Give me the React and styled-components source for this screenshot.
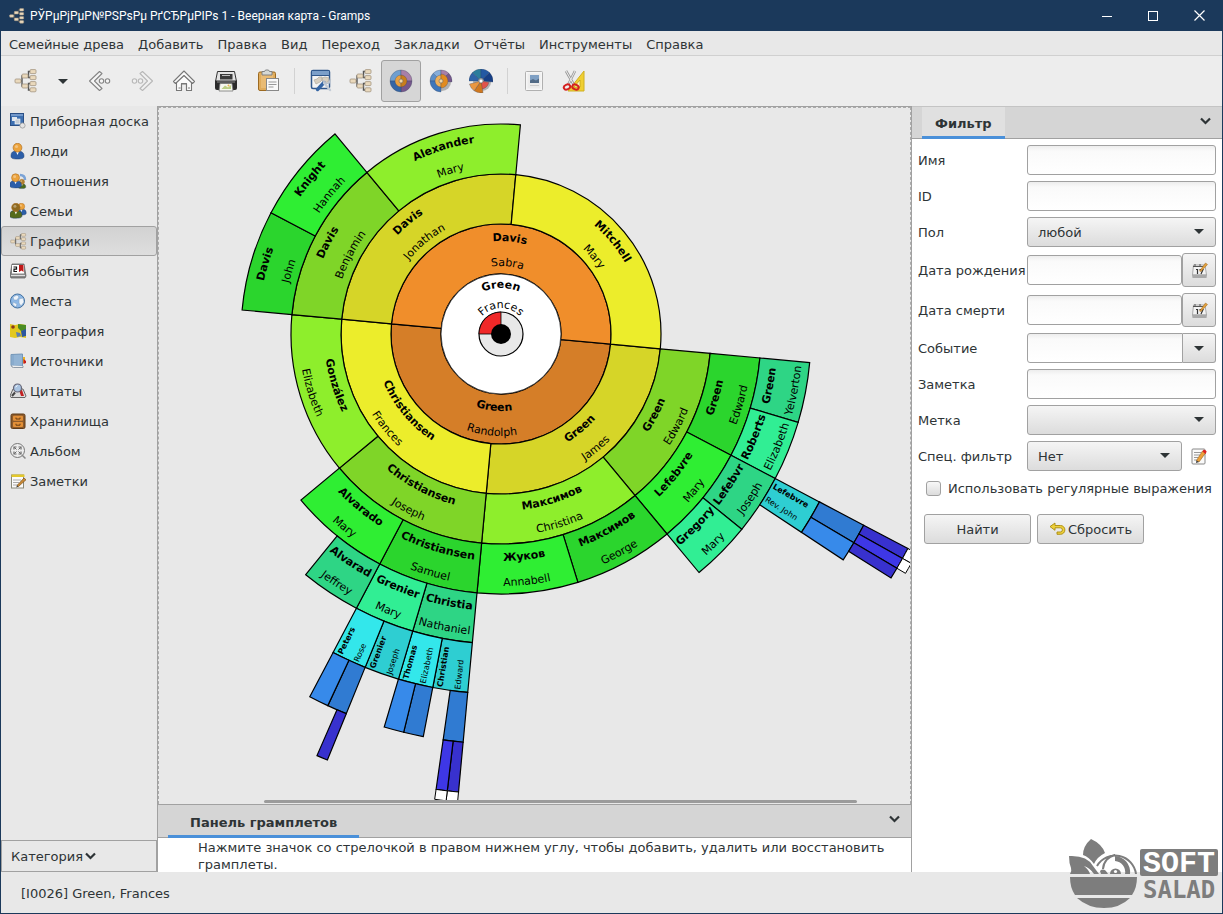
import React, { useState } from 'react';
import styled, { createGlobalStyle } from 'styled-components';

const NAVY = '#1b395b';
const INK = '#2e3436';
const LINE = '#a1a1a1';
const BLUE = '#4a90d9';

const GlobalStyle = createGlobalStyle`
  * { box-sizing: border-box; }
  body { margin: 0; }
  body, button, input, select {
    font-family: "DejaVu Sans", Verdana, sans-serif;
    font-size: 13px;
    line-height: 17px;
    color: ${INK};
  }
  button { padding: 0; border: none; background: none; }
  svg { display: block; flex: none; }
`;

const Window = styled.div`
  display: flex;
  flex-direction: column;
  height: 100vh;
  overflow: hidden;
  border: 1px solid ${NAVY};
  border-top: none;
  background: #e8e8e8;
`;

const TitleBar = styled.header`
  display: flex;
  align-items: center;
  height: 31px;
  flex: none;
  padding-left: 8px;
  background: ${NAVY};
  color: #fff;
`;

const Title = styled.h1`
  flex: 1;
  margin: 0 0 0 5px;
  font: 400 12px/16px Roboto, "Open Sans", sans-serif;
`;

const CaptionButton = styled.button`
  display: grid;
  place-items: center;
  width: 46px;
  height: 30px;
`;

const MenuBar = styled.nav`
  display: flex;
  align-items: center;
  gap: 14px;
  height: 25px;
  flex: none;
  padding: 2px 8px 0;
  border-bottom: 1px solid #d0d0d0;
`;

const Toolbar = styled.div`
  display: flex;
  align-items: center;
  height: 50px;
  flex: none;
  padding-left: 5px;
  background: #ededed;
`;

const ToolGroup = styled.div`
  display: flex;
  gap: ${(props) => props.$gap || 0}px;
`;

const ToolButton = styled.button`
  display: grid;
  place-items: center;
  width: ${(props) => (props.$narrow ? 34 : 40)}px;
  height: 42px;
  border: 1px solid ${(props) => (props.$active ? LINE : 'transparent')};
  border-radius: 3px;
  background: ${(props) => (props.$active ? '#d6d6d6' : 'none')};
`;

const Separator = styled.div`
  width: 1px;
  height: 26px;
  margin: 0 6px;
  background: #d2d2d2;
`;

const Body = styled.div`
  display: flex;
  flex: 1;
  min-height: 0;
`;

const Sidebar = styled.aside`
  display: flex;
  flex-direction: column;
  width: 156px;
  flex: none;
`;

const CategoryButton = styled.button`
  display: flex;
  align-items: center;
  gap: 3px;
  height: 30px;
  padding-left: 8px;
  border: 1px solid ${(props) => (props.$active ? LINE : 'transparent')};
  border-radius: 3px;
  background: ${(props) => (props.$active ? 'linear-gradient(#d2d2d2, #dedede)' : 'none')};
  text-align: left;
  white-space: nowrap;
`;

const CategoryMenu = styled.button`
  display: flex;
  align-items: center;
  gap: 2px;
  height: 32px;
  margin-top: auto;
  padding-left: 9px;
  border: 1px solid ${LINE};
`;

const Main = styled.main`
  display: flex;
  flex-direction: column;
  flex: 1;
  min-width: 0;
  border: 1px solid ${LINE};
  border-bottom: none;
`;

const Canvas = styled.div`
  position: relative;
  flex: 1;
  min-height: 0;
  overflow: hidden;
  border: 1px dashed #aaa;
  border-bottom: none;
`;

const ScrollThumb = styled.div`
  position: absolute;
  left: 14%;
  right: 7%;
  bottom: 1px;
  height: 3px;
  border-radius: 2px;
  background: #9b9b9b;
`;

const TabStrip = styled.div`
  display: flex;
  align-items: stretch;
  justify-content: space-between;
  height: ${(props) => props.$height}px;
  flex: none;
  padding: 0 10px;
  border-top: 1px solid ${(props) => (props.$topLine ? LINE : '#c4c4c4')};
  border-bottom: 1px solid ${LINE};
  background: #d5d5d5;
`;

const Tab = styled.button`
  margin-bottom: -1px;
  padding: 4px ${(props) => props.$pad}px 0;
  border-bottom: 3px solid ${BLUE};
  background: ${(props) => (props.$raised ? '#e0e0e0' : 'none')};
  font-weight: 700;
`;

const ChevronButton = styled.button`
  width: 12px;
  height: 27px;
`;

const GrampletHint = styled.p`
  height: 34px;
  flex: none;
  margin: 0;
  padding: 1px 16px 0 40px;
  overflow: hidden;
  background: #fff;
`;

const FilterPane = styled.section`
  width: 310px;
  flex: none;
  background: #fff;
`;

const FilterForm = styled.form`
  display: grid;
  grid-template-columns: 103px 1fr;
  align-items: center;
  gap: 6px;
  padding: 6px;
  white-space: nowrap;
`;

const FieldRow = styled.div`
  display: flex;
  align-items: center;
`;

const TextBox = styled.input`
  flex: 1;
  width: 100%;
  min-width: 0;
  height: 30px;
  padding: 0 8px;
  border: 1px solid ${LINE};
  border-radius: ${(props) => (props.$joined ? '3px 0 0 3px' : '3px')};
  background: linear-gradient(#ededed, #fafafa 5px, #fff);
`;

const PushButton = styled.button`
  display: flex;
  align-items: center;
  justify-content: center;
  gap: 2px;
  width: ${(props) => props.$width}px;
  height: ${(props) => props.$height || 30}px;
  border: 1px solid ${LINE};
  border-left-width: ${(props) => (props.$joined ? 0 : 1)}px;
  border-radius: ${(props) => (props.$joined ? '0 3px 3px 0' : '3px')};
  background: linear-gradient(#f5f5f5, #dcdcdc);
`;

const SelectWrap = styled.div`
  position: relative;
  flex: 1;

  &::after {
    content: '';
    position: absolute;
    right: 12px;
    top: 12px;
    border: 5px solid transparent;
    border-top-color: ${INK};
    border-bottom: none;
    pointer-events: none;
  }
`;

const Select = styled.select`
  appearance: none;
  display: block;
  width: 100%;
  height: 30px;
  padding: 0 10px;
  border: 1px solid ${LINE};
  border-radius: 3px;
  background: linear-gradient(#f5f5f5, #dcdcdc);
`;

const IconButton = styled.button`
  display: grid;
  place-items: center;
  width: 34px;
  height: 30px;
`;

const CheckRow = styled.label`
  grid-column: 1 / -1;
  display: flex;
  align-items: center;
  gap: 7px;
  height: 22px;
  padding-left: 8px;
`;

const CheckBox = styled.input`
  appearance: none;
  width: 15px;
  height: 15px;
  margin: 0;
  border: 1px solid ${LINE};
  border-radius: 3px;
  background: linear-gradient(#f8f8f8, #dcdcdc);

  &:checked { background: ${BLUE}; }
`;

const Actions = styled.div`
  grid-column: 1 / -1;
  display: flex;
  gap: 6px;
  padding: 9px 6px;
`;

const StatusBar = styled.footer`
  display: flex;
  align-items: center;
  height: 41px;
  flex: none;
  padding: 2px 20px 0;
`;

const Watermark = styled.svg`
  position: absolute;
  right: 4px;
  bottom: 4px;
`;

/* ---------- icons ---------- */

function TreeIcon({ size = 24 }) {
  const boxes = [[1, 10], [8, 5], [8, 15], [16, 0.6], [16, 6.6], [16, 12.6], [16, 18.8]];
  return (
    <svg width={size} height={size} viewBox="0 0 24 24">
      <path
        d="M6 12h2V7h2M8 12v5h2M13 7h1.500V2.500H17M14.500 7v1.500H17M13 17h1.500v-2.500H17M14.500 17v4H17"
        fill="none"
        stroke="#555"
        strokeWidth="1.400"
      />
      {boxes.map(([x, y]) => (
        <rect key={`${x}-${y}`} x={x} y={y} width="6" height="4" rx="1" fill="#ead9bc" stroke="#a39580" strokeWidth="0.800" />
      ))}
    </svg>
  );
}

function Triangle() {
  return (
    <svg width="10" height="5" viewBox="0 0 10 5"><path d="M0 0h10L5 5z" fill={INK} /></svg>
  );
}

function Chevron() {
  return (
    <svg width="11" height="8" viewBox="0 0 11 8">
      <path d="M1 1.500 5.500 6 10 1.500" fill="none" stroke={INK} strokeWidth="2.200" />
    </svg>
  );
}

function ArrowIcon({ forward }) {
  return (
    <svg width="24" height="24" viewBox="0 0 24 24" opacity={forward ? 0.5 : 1}>
      <g transform={forward ? 'matrix(-1 0 0 1 24 0)' : undefined} fill="#f6f6f6" stroke="#858585" strokeWidth="1.100">
        <path d="M11.500 2.500 14 4.500 6.500 12l7.500 7.500-2.500 2L1.500 12z" strokeLinejoin="round" />
        <circle cx="13.500" cy="12" r="2.200" />
        <circle cx="19.500" cy="12" r="2.200" />
      </g>
    </svg>
  );
}

function HomeIcon() {
  return (
    <svg width="24" height="24" viewBox="0 0 24 24" fill="#fafafa" stroke="#777" strokeWidth="1.100" strokeLinejoin="round">
      <path d="M4.500 13v8.500h5V15h5v6.500h5V13L12 6z" />
      <path d="M12 2 1.500 12.500l2 2L12 6.500l8.500 8 2-2z" />
      <path d="M9.500 21v-6.500h5V21M6.500 19h2M16 19h2" fill="none" />
    </svg>
  );
}

function PrinterIcon() {
  return (
    <svg width="24" height="24" viewBox="0 0 24 24">
      <path d="M3.500 2.500h17l2 10h-21z" fill="#e3e3e3" stroke="#333" />
      <path d="M6 5h12.500v5.500H6z" fill="#3a3a3a" />
      <path d="M8 6.500h8" stroke="#bbb" />
      <path d="M1 11.500h22V19a2 2 0 0 1-2 2H3a2 2 0 0 1-2-2z" fill="#2b2b2b" />
      <path d="M3 13h18" stroke="#8a8a8a" />
      <path d="M6 14.500h12l1 7.500H5z" fill="#f6f7ee" stroke="#777" strokeWidth="0.800" />
      <path d="M7.500 20l3.500-3.500 3 2 3-2.500v4z" fill="#bccf82" />
      <circle cx="14.500" cy="16.500" r="1" fill="#e8b44c" />
    </svg>
  );
}

function PasteIcon() {
  return (
    <svg width="24" height="24" viewBox="0 0 24 24">
      <rect x="2.500" y="3" width="17" height="18.500" rx="1.500" fill="#e0ac5c" stroke="#9c6a21" />
      <rect x="5" y="5" width="12" height="14" fill="#e9bb74" />
      <path d="M6 2.500h2.500L9.500 1h3l1 1.500H16V6H6z" fill="#d5d8d5" stroke="#77797a" strokeWidth="0.900" />
      <rect x="10.500" y="9.500" width="12" height="12" fill="#fafafa" stroke="#888" />
      <path d="M12.500 13h8M12.500 15.500h8M12.500 18h5" stroke="#999" />
    </svg>
  );
}

function ConfigViewIcon() {
  return (
    <svg width="24" height="24" viewBox="0 0 24 24">
      <rect x="2.500" y="1.500" width="18" height="18" rx="1.500" fill="#f4f4f4" stroke="#31588c" strokeWidth="1.500" />
      <path d="M3 2h17v4H3z" fill="#7c9fc9" />
      <path d="M3 6.500h17" stroke="#31588c" />
      <path d="M5 11l3-1 2-2h3v3l-2 2-4 2zM13 9l3-1 4 1-1 4-5 1z" fill="#d8cfc0" stroke="#b0aa9e" strokeWidth="0.700" />
      <path d="M8.500 20.500 15 13.500" stroke="#3465a4" strokeWidth="3.400" strokeLinecap="round" />
      <path d="M15 14l6 7" stroke="#c3ccd6" strokeWidth="2.400" strokeLinecap="round" />
      <path d="M14 11.500l3 3 3-.5 1.500-4" fill="none" stroke="#b9c2cc" strokeWidth="1.500" />
    </svg>
  );
}

const polar = (r, deg) => [r * Math.cos((deg * Math.PI) / 180), r * Math.sin((deg * Math.PI) / 180)];

const sectorPath = (r0, r1, a0, a1) => {
  const large = a1 - a0 > 180 ? 1 : 0;
  return `M${polar(r0, a0)}L${polar(r1, a0)}A${r1} ${r1} 0 ${large} 1 ${polar(r1, a1)}`
    + `L${polar(r0, a1)}A${r0} ${r0} 0 ${large} 0 ${polar(r0, a0)}Z`;
};

const WHEELS = {
  full: [
    [5, 11, 180, 270, '#6f9fd0'], [5, 11, 270, 360, '#a77fa8'], [5, 11, 0, 90, '#76578b'], [5, 11, 90, 180, '#3465a4'],
    [1, 6, 90, 270, '#e9a040'], [1, 6, -90, 90, '#c87e1c'],
  ],
  partial: [
    [5, 11, 180, 225, '#5d8fc8'], [5, 11, 225, 270, '#87aeda'], [5, 11, 270, 315, '#a77fa8'], [5, 11, 315, 365, '#76578b'],
    [5, 11, 90, 180, '#3f76b9'], [1, 6, 90, 270, '#efb05a'], [1, 7, -90, 90, '#e28b1e'],
  ],
  descendant: [
    [3, 12, 180, 225, '#2f64a8'], [3, 12, 225, 270, '#2b7d9c'], [3, 12, 270, 315, '#2459a3'], [3, 12, 315, 365, '#173f86'],
    [2, 8, 10, 90, '#e2544b'], [2, 12, 80, 125, '#d0781e'], [2, 12, 125, 165, '#ea9740'],
  ],
};

function WheelIcon({ kind }) {
  return (
    <svg width="24" height="24" viewBox="-12 -12 24 24">
      <circle cx="1" cy="1" r="9" fill="#000" opacity="0.25" />
      {WHEELS[kind].map(([r0, r1, a0, a1, fill]) => (
        <path key={`${r1}-${a0}`} d={sectorPath(r0, r1, a0, a1)} fill={fill} stroke="#33405c" strokeWidth="0.300" />
      ))}
      <circle r="2" fill={kind === 'descendant' ? '#fff' : '#f3d7a4'} stroke="#666" strokeWidth="0.600" />
    </svg>
  );
}

function PictureDocIcon() {
  return (
    <svg width="24" height="24" viewBox="0 0 24 24">
      <rect x="3.500" y="2.500" width="17" height="19" rx="1" fill="#f6f6f6" stroke="#b0b0b0" />
      <rect x="5.500" y="4.500" width="13" height="15" fill="#ececec" />
      <rect x="8" y="6" width="9" height="8" fill="#7fa0c4" />
      <path d="M8 14v-2.500l3-1.500 3 1.500 3-2V14z" fill="#526b86" />
      <path d="M8 16.500h9" stroke="#ccc" />
    </svg>
  );
}

function ScissorsIcon() {
  return (
    <svg width="24" height="24" viewBox="0 0 24 24">
      <path d="M22 2v20H6z" fill="#f0cf32" stroke="#d0b020" />
      <path d="M18 11v7h-6z" fill="#fff6c0" stroke="#b99b12" strokeWidth="0.700" />
      <path d="M4 2l8 14M13 2 6 16" stroke="#999" strokeWidth="2.600" />
      <path d="M4 2l8 14M13 2 6 16" stroke="#eee" strokeWidth="1" />
      <ellipse cx="5" cy="18" rx="3.300" ry="2.400" fill="none" stroke="#d42020" strokeWidth="2" transform="rotate(-25 5 18)" />
      <ellipse cx="13.500" cy="18" rx="3.300" ry="2.400" fill="none" stroke="#d42020" strokeWidth="2" transform="rotate(25 13.500 18)" />
    </svg>
  );
}

function Person({ x, y = 0, s = 1, head = '#eca33c', body = '#2c5ea8' }) {
  return (
    <g transform={`translate(${x} ${y}) scale(${s})`}>
      <path d="M0 13c0-4 2-5 6-5s7 1 7 5c0 2-1 3-6.500 3S0 15 0 13z" fill={body} stroke="#1e3e70" strokeWidth="0.500" />
      <path d="M5 8.500 6.500 12 8 8.500z" fill="#fff" />
      <circle cx="6.500" cy="4.700" r="4.400" fill={head} stroke="#a9681b" strokeWidth="0.600" />
      <circle cx="5.500" cy="3.500" r="1.600" fill="#fff" opacity="0.350" />
    </g>
  );
}

const SIDE_ICONS = {
  dashboard: (
    <>
      <rect x="0.500" y="0.500" width="13" height="12" fill="#3d6fb0" stroke="#2a4f85" />
      <path d="M1 2h12" stroke="#a8c3e6" />
      <rect x="2" y="4" width="5" height="4" fill="#dfe6ee" />
      <rect x="5" y="6" width="5" height="5" fill="#c3ccd6" stroke="#fff" strokeWidth="0.600" />
      <circle cx="12.500" cy="12.500" r="2.600" fill="#e4e4e4" stroke="#999" strokeWidth="0.800" />
    </>
  ),
  people: <Person x={1} />,
  relations: (
    <>
      <path d="M10 2q5 0 5 5" fill="none" stroke="#7ba3d6" strokeWidth="2.500" />
      <Person x={8} y={6} s={0.6} body="#4c6a1c" head="#b0802f" />
      <Person x={-0.3} y={0.5} s={0.9} />
    </>
  ),
  families: (
    <>
      <Person x={6.5} y={0} s={0.75} />
      <Person x={-0.3} y={0} s={0.95} body="#556b1b" head="#8f6a1f" />
    </>
  ),
  events: (
    <>
      <path d="M2 1h12l2 12-1 2H1l-1-2z" fill="#8a8a8a" stroke="#555" strokeWidth="0.700" />
      <rect x="2" y="2" width="12" height="8.500" fill="#fff" />
      <path d="M9 2h4.500v7l-2-1.500L9 9z" fill="#c01818" />
      <path d="M3.500 4h3v2.200H4V8.500h3" fill="none" stroke="#111" strokeWidth="1.200" />
      <path d="M1 12.500h14" stroke="#ddd" />
    </>
  ),
  places: (
    <>
      <circle cx="7.500" cy="8" r="7" fill="#8db8e6" stroke="#42709f" />
      <path d="M3 4l4-2 2 2-2 3H4zM9 6l4-1 1 4-3 4-2-3zM3 9l4 2-1 3-3-2z" fill="#eef4fa" stroke="#7f9fbe" strokeWidth="0.500" />
    </>
  ),
  geography: (
    <>
      <path d="M0 1l5 1 5-1 6 1v13l-6-1-5 1-5-1z" fill="#e2c81e" />
      <path d="M8 1l8 1v5l-5 1-3-3z" fill="#4a8c22" />
      <path d="M11 8l5-2v7l-4 1z" fill="#2c57a0" />
      <path d="M6 9l4 1 1 3-4 1z" fill="#5b7fb4" />
      <circle cx="3" cy="4" r="1.800" fill="#8a3a1c" />
    </>
  ),
  sources: (
    <>
      <path d="M13 4h2v6h-2z" fill="#e8b422" />
      <path d="M13.500 6 16 8v2l-2.500 1z" fill="#c81e1e" />
      <path d="M1 1.500 12.500 1v12H2q-1 0-1-1z" fill="#93b4d4" stroke="#7396b8" />
      <path d="M1.500 12.500q0 2 2 2H13V13" fill="#eee" stroke="#7a8794" strokeWidth="0.800" />
      <path d="M3 2v10" stroke="#7fa2c6" />
    </>
  ),
  citations: (
    <>
      <path d="M3 6h10l3 7-1 1.500H1L0 13z" fill="#ddd" stroke="#666" />
      <path d="M9 7l3 0 2 6h-3z" fill="#c22222" />
      <path d="M5 9.500 2 13" stroke="#444" strokeWidth="2" />
      <circle cx="7.500" cy="5" r="4" fill="#a9c4e2" stroke="#667" strokeWidth="1.200" />
      <path d="M5.500 4l2-1.500" stroke="#fff" />
    </>
  ),
  repositories: (
    <>
      <rect x="1" y="1" width="14" height="14.500" rx="1.500" fill="#8d5b2b" stroke="#5f3a17" />
      <rect x="3" y="2.800" width="10" height="5" rx="1" fill="#e39038" />
      <rect x="3" y="9" width="10" height="5" rx="1" fill="#e39038" />
      <path d="M6 4.500v1.500h4V4.500M6 10.700v1.500h4v-1.500" fill="none" stroke="#6b3f13" />
    </>
  ),
  album: (
    <>
      <circle cx="7.500" cy="7.500" r="7" fill="#ededed" stroke="#777" />
      <path d="M12 12l3.500 3.500" stroke="#888" strokeWidth="1.500" />
      <path d="M4 6.500V4h2.500M8.500 4H11v2.500M11 8.500V11H8.500M6.500 11H4V8.500" fill="none" stroke="#666" strokeWidth="1.200" />
      <path d="M4.500 4.500l2 2M10.500 4.500l-2 2M10.500 10.500l-2-2M4.500 10.500l2-2" stroke="#666" />
    </>
  ),
  notes: (
    <>
      <rect x="1.500" y="2" width="12" height="13" fill="#fbfbfb" stroke="#8a8a7a" />
      <path d="M1.500 1.500h13v2.500h-13z" fill="#e3c82c" />
      <path d="M3 7h8M3 9.500h6M3 12h5" stroke="#aaa" />
      <path d="M7 12.500 14 5l2 1.800-7.500 6.700z" fill="#c98a35" stroke="#6e4413" strokeWidth="0.600" />
      <path d="M7 12.500 6.200 14.500l2.300-1z" fill="#333" />
    </>
  ),
};

function SideIcon({ name }) {
  if (name === 'charts') return <TreeIcon size={17} />;
  return <svg width="17" height="17" viewBox="0 0 17 17">{SIDE_ICONS[name]}</svg>;
}

function CalendarIcon() {
  return (
    <svg width="17" height="17" viewBox="0 0 17 17">
      <path d="M2.500 3h11.500l1.500 10h-14z" fill="#f3f3f3" stroke="#999" strokeWidth="0.800" />
      <path d="M1 12.500h15l-.5 3.500h-14z" fill="#a9a9a9" />
      <path d="M2 4.500h12M4 2v3M9 2v3" stroke="#555" />
      <path d="M5 7.500h1.500V12M8.500 7.500H12L10 12" fill="none" stroke="#333" strokeWidth="1.200" />
      <path d="M8.500 9 14.500 1l2 1.500L10 9.500z" fill="#e2a13e" stroke="#9d6218" strokeWidth="0.500" />
    </svg>
  );
}

function EditIcon() {
  return (
    <svg width="16" height="17" viewBox="0 0 16 17">
      <rect x="1" y="1" width="13" height="15" rx="1" fill="#fafafa" stroke="#888" />
      <path d="M3 4.500h7M3 7h6M3 9.500h4M3 12h4" stroke="#999" />
      <path d="M5.500 12.500 11.500 3l3 2-6.500 9z" fill="#eda13a" stroke="#97601a" strokeWidth="0.600" />
      <path d="M11.500 3.500l1-1.800q2-.3 3.200 1.800L14.500 6z" fill="#d22" />
      <path d="M5.500 12.500 5 15l3-1z" fill="#333" />
    </svg>
  );
}

function UndoIcon() {
  return (
    <svg width="17" height="14" viewBox="0 0 17 14">
      <path
        d="M6 1v2.500h5.500a4.300 4.300 0 0 1 0 8.800H8V10h3.300a2 2 0 0 0 0-4.200H6v2.500L1 4.600z"
        fill="#edd03c"
        stroke="#a98a0c"
        strokeWidth="0.900"
        strokeLinejoin="round"
      />
    </svg>
  );
}

/* ---------- fan chart ---------- */

const RING = 50;
const CENTER_RADIUS = 60;
const START_ANGLE = 5.3;

// father colour, mother colour
const GENERATION_COLORS = [
  null,
  ['#d57e28', '#f08e2b'],
  ['#d6d528', '#eced2b'],
  ['#7fd528', '#8eee2c'],
  ['#2bd52d', '#2fee33'],
  ['#2ed585', '#31ee94'],
  ['#2eced2', '#33e7eb'],
  ['#307bd2', '#378aea'],
  ['#3831ce', '#3e37e6'],
];

const ANCESTORS = [
  null,
  { 0: ['Green', 'Randolph'], 1: ['Davis', 'Sabra'] },
  {
    0: ['Green', 'James'], 1: ['Christiansen', 'Frances'], 2: ['Davis', 'Jonathan'], 3: ['Mitchell', 'Mary'],
  },
  {
    0: ['Green', 'Edward'],
    1: ['Максимов', 'Christina'],
    2: ['Christiansen', 'Joseph'],
    3: ['González', 'Elizabeth'],
    4: ['Davis', 'Benjamin'],
    5: ['Alexander', 'Mary'],
  },
  {
    0: ['Green', 'Edward'],
    1: ['Lefebvre', 'Mary'],
    2: ['Максимов', 'George'],
    3: ['Жуков', 'Annabell'],
    4: ['Christiansen', 'Samuel'],
    5: ['Alvarado', 'Mary'],
    8: ['Davis', 'John'],
    9: ['Knight', 'Hannah'],
  },
  {
    0: ['Green', 'Yelverton'],
    1: ['Roberts', 'Elizabeth'],
    2: ['Lefebvr', 'Joseph'],
    3: ['Gregory', 'Mary'],
    8: ['Christia', 'Nathaniel'],
    9: ['Grenier', 'Mary'],
    10: ['Alvarad', 'Jeffrey'],
  },
  {
    4: ['Lefebvre', 'Rev. John'],
    16: ['Christian', 'Edward'],
    17: ['Thomas', 'Elizabeth'],
    18: ['Grenier', 'Joseph'],
    19: ['Peters', 'Rose'],
  },
  {
    8: [], 9: [], 32: [], 34: [], 35: [], 38: [], 39: [],
  },
  {
    16: [], 17: [], 18: [], 64: [], 65: [], 76: [],
  },
];

const MORE_ANCESTORS = [16, 17, 64, 65];

const ChartText = styled.text`
  font-family: "DejaVu Sans", Verdana, sans-serif;
  font-size: ${(props) => props.$size}px;
  font-weight: ${(props) => (props.$bold ? 700 : 400)};
  fill: #000;
`;

function ArcLabel({
  id, text, radius, angle, flip, bold,
}) {
  const span = 89;
  const from = polar(radius, flip ? angle + span : angle - span);
  const to = polar(radius, flip ? angle - span : angle + span);
  return (
    <>
      <path id={id} d={`M${from}A${radius} ${radius} 0 0 ${flip ? 0 : 1} ${to}`} fill="none" />
      <ChartText $size={11} $bold={bold} textAnchor="middle">
        <textPath href={`#${id}`} startOffset="50%">{text}</textPath>
      </ChartText>
    </>
  );
}

function RadialLabel({
  text, inner, angle, inward, bold,
}) {
  const [x, y] = polar(inward ? inner + RING - 2 : inner + 2, angle);
  return (
    <ChartText $size={8} $bold={bold} x={x} y={y} transform={`rotate(${inward ? angle - 180 : angle} ${x} ${y})`}>
      {text}
    </ChartText>
  );
}

function Sector({ generation, index, names }) {
  const inner = CENTER_RADIUS + RING * (generation - 1);
  const width = 360 / 2 ** generation;
  const a0 = START_ANGLE + index * width;
  const mid = a0 + width / 2;
  const flip = mid < 180 + START_ANGLE;
  const inward = mid > 90;
  const [surname, given] = names;
  const key = `arc-${generation}-${index}`;
  return (
    <g>
      <path
        d={sectorPath(inner, inner + RING, a0, a0 + width)}
        fill={GENERATION_COLORS[generation][index % 2]}
        stroke="#000"
        strokeWidth="1.200"
      />
      {surname && generation < 6 && (
        <>
          <ArcLabel id={`${key}-s`} text={surname} radius={inner + (flip ? 17 : 33)} angle={mid} flip={flip} bold />
          <ArcLabel id={`${key}-g`} text={given} radius={inner + (flip ? 42 : 8)} angle={mid} flip={flip} />
        </>
      )}
      {surname && generation === 6 && (
        <>
          <RadialLabel text={surname} inner={inner} angle={a0 + width * (inward ? 0.73 : 0.33)} inward={inward} bold />
          <RadialLabel text={given} inner={inner} angle={a0 + width * (inward ? 0.22 : 0.81)} inward={inward} />
        </>
      )}
    </g>
  );
}

function FanChart() {
  const outer = CENTER_RADIUS + RING * 8;
  const step = 360 / 2 ** 8;
  return (
    <svg width="100%" height="100%" role="img" aria-label="Веерная карта">
      <g transform="translate(342 226)">
        {ANCESTORS.map((people, generation) => people && Object.keys(people).map((index) => (
          <Sector
            key={`${generation}-${index}`}
            generation={generation}
            index={Number(index)}
            names={people[index]}
          />
        )))}
        {MORE_ANCESTORS.map((i) => (
          <path
            key={i}
            d={sectorPath(outer, outer + 10, START_ANGLE + i * step, START_ANGLE + (i + 1) * step)}
            fill="#fff"
            stroke="#000"
          />
        ))}
        <circle r={CENTER_RADIUS} fill="#fff" stroke="#000" strokeWidth="0.700" />
        <circle r="22" fill="#e8e8e8" stroke="#000" strokeWidth="1.200" />
        <path d="M0 0H-22A22 22 0 0 1 0-22z" fill="#f02828" stroke="#000" strokeWidth="0.800" />
        <circle r="10" />
        <ArcLabel id="arc-root-s" text="Green" radius={46} angle={270} bold />
        <ArcLabel id="arc-root-g" text="Frances" radius={26} angle={270} />
      </g>
    </svg>
  );
}

/* ---------- page ---------- */

const MENUS = ['Семейные древа', 'Добавить', 'Правка', 'Вид', 'Переход', 'Закладки', 'Отчёты', 'Инструменты', 'Справка'];

const CATEGORIES = [
  ['dashboard', 'Приборная доска'],
  ['people', 'Люди'],
  ['relations', 'Отношения'],
  ['families', 'Семьи'],
  ['charts', 'Графики'],
  ['events', 'События'],
  ['places', 'Места'],
  ['geography', 'География'],
  ['sources', 'Источники'],
  ['citations', 'Цитаты'],
  ['repositories', 'Хранилища'],
  ['album', 'Альбом'],
  ['notes', 'Заметки'],
];

function DateField({ id, label }) {
  return (
    <>
      <label htmlFor={id}>{label}</label>
      <FieldRow>
        <TextBox id={id} type="text" />
        <PushButton type="button" $width={34} $height={34} aria-label="Календарь"><CalendarIcon /></PushButton>
      </FieldRow>
    </>
  );
}

function Filter() {
  return (
    <FilterPane>
      <TabStrip $height={33}>
        <Tab type="button" $pad={13} $raised>Фильтр</Tab>
        <ChevronButton type="button" aria-label="Меню"><Chevron /></ChevronButton>
      </TabStrip>
      <FilterForm onSubmit={(e) => e.preventDefault()}>
        <label htmlFor="name">Имя</label>
        <TextBox id="name" type="text" />
        <label htmlFor="person-id">ID</label>
        <TextBox id="person-id" type="text" />
        <label htmlFor="gender">Пол</label>
        <SelectWrap>
          <Select id="gender"><option>любой</option></Select>
        </SelectWrap>
        <DateField id="birth" label="Дата рождения" />
        <DateField id="death" label="Дата смерти" />
        <label htmlFor="event">Событие</label>
        <FieldRow>
          <TextBox id="event" type="text" $joined />
          <PushButton type="button" $width={33} $joined aria-label="Список событий"><Triangle /></PushButton>
        </FieldRow>
        <label htmlFor="note">Заметка</label>
        <TextBox id="note" type="text" />
        <label htmlFor="tag">Метка</label>
        <SelectWrap>
          <Select id="tag" />
        </SelectWrap>
        <label htmlFor="custom">Спец. фильтр</label>
        <FieldRow>
          <SelectWrap>
            <Select id="custom"><option>Нет</option></Select>
          </SelectWrap>
          <IconButton type="button" aria-label="Изменить"><EditIcon /></IconButton>
        </FieldRow>
        <CheckRow>
          <CheckBox type="checkbox" />
          Использовать регулярные выражения
        </CheckRow>
        <Actions>
          <PushButton type="submit" $width={107}>Найти</PushButton>
          <PushButton type="reset" $width={107}>
            <UndoIcon />
            Сбросить
          </PushButton>
        </Actions>
      </FilterForm>
    </FilterPane>
  );
}

function SoftSaladLogo() {
  return (
    <Watermark width="150" height="72" viewBox="0 0 150 72" fill="#7d7d7d">
      <path d="M14 17Q14 8 22 1q11 5 14 14-8 4-11 11-5-7-11-9z" />
      <path d="M0 18q18-1 24 10l6 8h-5q-4-6-10-8 5 4 6 8H1q2-3 1-6-2-5-2-12z" />
      <path
        d="M28 28A21 21 0 0 1 67 36M34 31A15 15 0 0 1 46 17"
        fill="none"
        stroke="#7d7d7d"
        strokeWidth="2"
      />
      <path d="M46 18a16 16 0 0 1 15 18h-5a11 11 0 0 0-10-13z" />
      <path d="M31 33q4-4 8 3h-7z" />
      <path d="M41 36a5.500 5.500 0 1 1 11 0z" />
      <circle cx="46.500" cy="33.500" r="1.600" fill="#fff" />
      <path d="M1 39h67q0 11-5 18H6Q1 50 1 39z" />
      <path d="M8 60h53q-10 10-26 10T8 60z" />
      <rect x="71" y="11" width="78" height="27" rx="2" />
      <text x="74" y="34" fontFamily="Liberation Mono, monospace" fontWeight="700" fontSize="30" fill="#fff">SOFT</text>
      <text x="74" y="60" fontFamily="DejaVu Sans Mono, monospace" fontWeight="700" fontSize="24">SALAD</text>
    </Watermark>
  );
}

export default function App() {
  const [category, setCategory] = useState('charts');

  return (
    <>
      <GlobalStyle />
      <Window>
        <TitleBar>
          <TreeIcon size={16} />
          <Title>РЎРµРјРµР№РЅРѕРµ РґСЂРµРІРѕ 1 - Веерная карта - Gramps</Title>
          <CaptionButton type="button" aria-label="Свернуть">
            <svg width="10" height="10"><path d="M0 5.500h10" stroke="#fff" /></svg>
          </CaptionButton>
          <CaptionButton type="button" aria-label="Развернуть">
            <svg width="10" height="10"><rect x="0.500" y="0.500" width="9" height="9" fill="none" stroke="#fff" /></svg>
          </CaptionButton>
          <CaptionButton type="button" aria-label="Закрыть">
            <svg width="11" height="11"><path d="M.5.500l10 10M10.500.500l-10 10" stroke="#fff" strokeWidth="1.200" /></svg>
          </CaptionButton>
        </TitleBar>
        <MenuBar>
          {MENUS.map((menu) => <button key={menu} type="button">{menu}</button>)}
        </MenuBar>
        <Toolbar>
          <ToolGroup>
            <ToolButton type="button" aria-label="Семейные древа"><TreeIcon /></ToolButton>
            <ToolButton type="button" aria-label="Недавние" $narrow><Triangle /></ToolButton>
          </ToolGroup>
          <ToolGroup $gap={2}>
            <ToolButton type="button" aria-label="Назад"><ArrowIcon /></ToolButton>
            <ToolButton type="button" aria-label="Вперёд"><ArrowIcon forward /></ToolButton>
            <ToolButton type="button" aria-label="Домой"><HomeIcon /></ToolButton>
            <ToolButton type="button" aria-label="Печать"><PrinterIcon /></ToolButton>
            <ToolButton type="button" aria-label="Буфер"><PasteIcon /></ToolButton>
          </ToolGroup>
          <Separator />
          <ToolGroup>
            <ToolButton type="button" aria-label="Настроить"><ConfigViewIcon /></ToolButton>
            <ToolButton type="button" aria-label="Родословная"><TreeIcon /></ToolButton>
            <ToolButton type="button" aria-label="Веерная карта" $active><WheelIcon kind="full" /></ToolButton>
            <ToolButton type="button" aria-label="Карта потомков"><WheelIcon kind="partial" /></ToolButton>
            <ToolButton type="button" aria-label="Двусторонняя карта"><WheelIcon kind="descendant" /></ToolButton>
          </ToolGroup>
          <Separator />
          <ToolGroup>
            <ToolButton type="button" aria-label="Отчёты"><PictureDocIcon /></ToolButton>
            <ToolButton type="button" aria-label="Инструменты"><ScissorsIcon /></ToolButton>
          </ToolGroup>
        </Toolbar>
        <Body>
          <Sidebar>
            {CATEGORIES.map(([name, label]) => (
              <CategoryButton key={name} type="button" $active={name === category} onClick={() => setCategory(name)}>
                <SideIcon name={name} />
                {label}
              </CategoryButton>
            ))}
            <CategoryMenu type="button">
              Категория
              <Chevron />
            </CategoryMenu>
          </Sidebar>
          <Main>
            <Canvas>
              <FanChart />
              <ScrollThumb />
            </Canvas>
            <TabStrip $height={34} $topLine>
              <Tab type="button" $pad={22}>Панель грамплетов</Tab>
              <ChevronButton type="button" aria-label="Меню"><Chevron /></ChevronButton>
            </TabStrip>
            <GrampletHint>
              Нажмите значок со стрелочкой в правом нижнем углу, чтобы добавить, удалить или восстановить грамплеты.
            </GrampletHint>
          </Main>
          <Filter />
        </Body>
        <StatusBar>[I0026] Green, Frances</StatusBar>
        <SoftSaladLogo />
      </Window>
    </>
  );
}
